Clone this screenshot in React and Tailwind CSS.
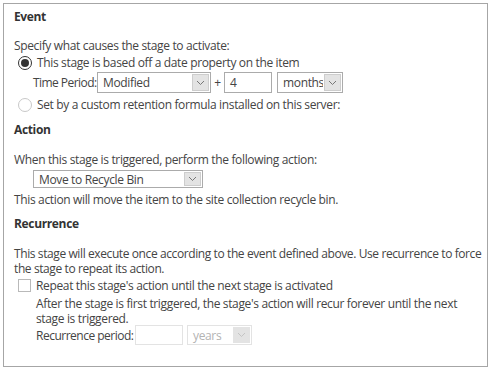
const font = { fontFamily: '"Open Sans", "Noto Sans", sans-serif', letterSpacing: "-0.35px" };

function Chevron({ disabled }) {
  return (
    <svg width="9" height="6" viewBox="0 0 9 6" className="block">
      <path d="M1 1 L4.5 4.5 L8 1" fill="none" stroke={disabled ? "#c4c4c4" : "#777"} strokeWidth="1" />
    </svg>
  );
}

function Select({ value, width, height = 21, disabled }) {
  return (
    <div
      className={`shrink-0 flex items-stretch border ${disabled ? "border-[#e3e3e3] text-[#b3b3b3]" : "border-[#ababab] text-[#444]"} bg-white`}
      style={{ width, height }}
    >
      <div className="flex-1 flex items-center pl-[5px] whitespace-nowrap overflow-hidden">{value}</div>
      <div className={`w-[17px] shrink-0 flex items-center justify-center m-[1px] ${disabled ? "bg-[#e3e3e3]" : "bg-[#e3e3e3] border border-[#cdcdcd]"}`}>
        <Chevron disabled={disabled} />
      </div>
    </div>
  );
}

function Radio({ checked }) {
  return (
    <span className={`w-[14px] h-[14px] shrink-0 rounded-full border flex items-center justify-center bg-white ${checked ? "border-[#333]" : "border-[#c8c8c8]"}`}>
      {checked && <span className="w-[8px] h-[8px] rounded-full bg-[#333]" />}
    </span>
  );
}

export default function App() {
  return (
    <div className="w-[491px] h-[369px] bg-white p-[3px] text-[12px] text-[#444]" style={font}>
      <div className="w-[485px] h-[364px] border border-[#a6a6a6] px-[10px] leading-[15px]">
        <div className="mt-[5px] h-[15px] font-bold text-[#333]">Event</div>
        <div className="mt-[14px] h-[15px] whitespace-nowrap">Specify what causes the stage to activate:</div>
        <div className="mt-[1px] h-[17px] flex items-center gap-[5px] pl-[4px] whitespace-nowrap">
          <Radio checked />
          <span>This stage is based off a date property on the item</span>
        </div>
        <div className="mt-[1px] h-[21px] flex items-center pl-[19px]">
          <span className="w-[64px] shrink-0 whitespace-nowrap tracking-[-0.55px]">Time Period:</span>
          <Select value="Modified" width={114} />
          <span className="w-[13px] shrink-0 text-center">+</span>
          <div className="w-[48px] h-[21px] shrink-0 border border-[#ababab] flex items-center pl-[5px]">4</div>
          <span className="w-[5px] shrink-0" />
          <Select value="months" width={66} />
        </div>
        <div className="mt-[3px] h-[17px] flex items-center gap-[5px] pl-[4px] whitespace-nowrap">
          <Radio />
          <span>Set by a custom retention formula installed on this server:</span>
        </div>
        <div className="mt-[9px] h-[15px] font-bold text-[#333]">Action</div>
        <div className="mt-[15px] h-[15px] whitespace-nowrap">When this stage is triggered, perform the following action:</div>
        <div className="mt-[3px] pl-[19px]">
          <Select value="Move to Recycle Bin" width={170} height={18} />
        </div>
        <div className="mt-[4px] h-[15px] whitespace-nowrap">This action will move the item to the site collection recycle bin.</div>
        <div className="mt-[9px] h-[15px] font-bold text-[#333]">Recurrence</div>
        <div className="mt-[15px] h-[30px] w-[472px] tracking-[-0.4px]">
          This stage will execute once according to the event defined above. Use recurrence to force<br />
          the stage to repeat its action.
        </div>
        <div className="mt-[1px] h-[16px] flex items-center gap-[5px] pl-[4px] whitespace-nowrap">
          <span className="w-[13px] h-[13px] shrink-0 border border-[#b9b9b9] bg-white" />
          <span>Repeat this stage's action until the next stage is activated</span>
        </div>
        <div className="mt-[3px] h-[29px] pl-[22px] w-[448px]">
          After the stage is first triggered, the stage's action will recur forever until the next stage is triggered.
        </div>
        <div className="h-[20px] flex items-center pl-[22px]">
          <span className="w-[99px] shrink-0 whitespace-nowrap tracking-[-0.5px]">Recurrence period:</span>
          <div className="w-[48px] h-[20px] shrink-0 border border-[#e3e3e3]" />
          <span className="w-[4px] shrink-0" />
          <Select value="years" width={65} height={20} disabled />
        </div>
      </div>
    </div>
  );
}
